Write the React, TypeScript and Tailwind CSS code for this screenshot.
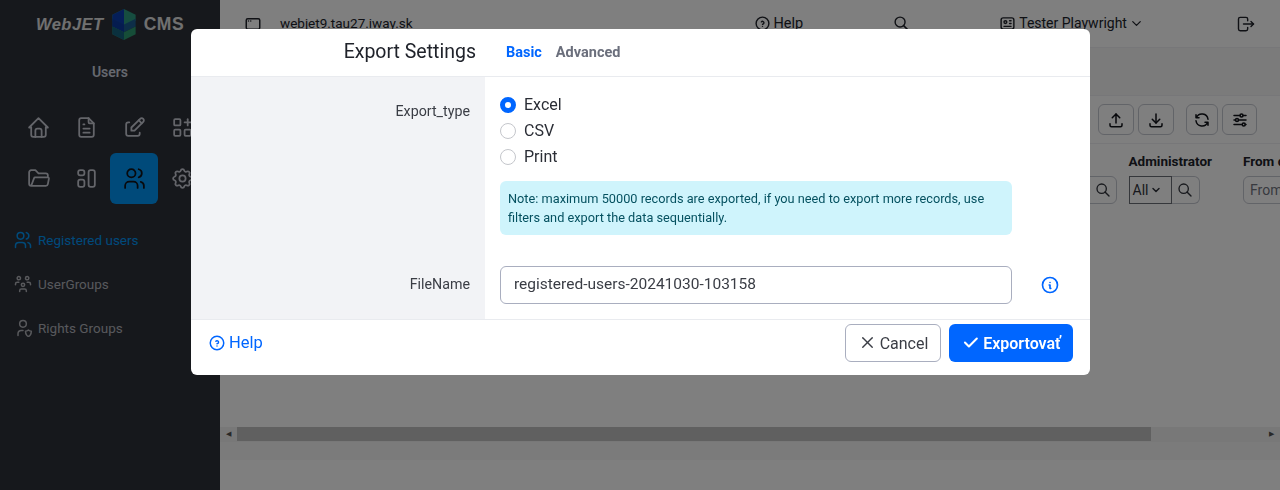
import {
  TbAdjustmentsHorizontal,
  TbApps,
  TbAppWindow,
  TbCheck,
  TbChevronDown,
  TbDownload,
  TbEdit,
  TbFileText,
  TbFolderOpen,
  TbHelpCircle,
  TbHome,
  TbId,
  TbInfoCircle,
  TbLayout,
  TbLogout,
  TbRefresh,
  TbSearch,
  TbSettings,
  TbUpload,
  TbUsers,
  TbUsersGroup,
  TbUserShield,
  TbX,
} from 'react-icons/tb'

const railIcons = [TbHome, TbFileText, TbEdit, TbApps, TbFolderOpen, TbLayout, TbUsers, TbSettings]

const sideLinks = [
  { label: 'Registered users', Icon: TbUsers, active: true },
  { label: 'UserGroups', Icon: TbUsersGroup, active: false },
  { label: 'Rights Groups', Icon: TbUserShield, active: false },
]

function Logo() {
  return (
    <div className="flex h-[47px] items-center justify-center gap-[7px] pt-[1px]">
      <span className="font-['Liberation_Sans',sans-serif] text-[16.5px] font-bold italic tracking-[0.5px] text-[#e0e0e0]">WebJET</span>
      <svg width="26" height="31" viewBox="0 0 26 32">
        <polygon points="13,0 25,6 25,12 13,18 1,12 1,6" fill="#2c9a80" />
        <polygon points="13,0 13,18 1,12 1,6" fill="#0a3cb0" />
        <polygon points="25,10 25,18 13,24 1,18 1,10 13,16" fill="#1a5c90" />
        <polygon points="13,16 13,24 1,18 1,10" fill="#0a38a0" />
        <polygon points="25,18 25,26 13,32 1,26 1,18 13,24" fill="#2c9a70" />
        <polygon points="13,24 13,32 1,26 1,18" fill="#14607c" />
      </svg>
      <span className="font-['Liberation_Sans',sans-serif] text-[17.5px] font-bold tracking-[0.5px] text-[#e0e0e0]">CMS</span>
    </div>
  )
}

function Sidebar() {
  return (
    <aside className="flex h-full w-[220px] shrink-0 flex-col overflow-hidden bg-[#2d3039]">
      <Logo />
      <div className="mt-[15px] text-center text-[14px] font-semibold text-[#cbd0de]">Users</div>
      <div className="mt-[19px] grid w-[260px] grid-cols-[repeat(4,48px)] pl-[14px]">
        {railIcons.map((Icon, i) => (
          <div
            key={i}
            className={`flex h-[51px] w-[48px] items-center justify-center rounded-[6px] ${i === 6 ? 'bg-[#0095f5] text-[#101218]' : 'text-[#c8cbd4]'}`}
          >
            <Icon size={25} strokeWidth={1.7} />
          </div>
        ))}
      </div>
      <nav className="mt-[23px] flex flex-col gap-[18px] pl-[13px]">
        {sideLinks.map(({ label, Icon, active }) => (
          <div key={label} className={`flex h-[26px] items-center gap-[5px] text-[13.5px] ${active ? 'text-[#0095f5]' : 'text-[#b0b2b8]'}`}>
            <Icon size={20} strokeWidth={1.8} />
            <span>{label}</span>
          </div>
        ))}
      </nav>
    </aside>
  )
}

function IconButton({ children }: { children: React.ReactNode }) {
  return <div className="flex h-[31px] items-center justify-center rounded-[6px] border border-[#c5c8d0] text-[#101218]">{children}</div>
}

function Main() {
  return (
    <main className="flex h-full min-w-0 flex-1 flex-col overflow-hidden bg-white">
      <header className="flex h-[48px] shrink-0 items-center border-b border-[#eeeff2] text-[14px] text-[#20232b]">
        <TbAppWindow size={18} className="ml-[24px]" />
        <span className="ml-[18px] text-[13.5px]">webjet9.tau27.iway.sk</span>
        <TbHelpCircle size={17} className="ml-[341px]" />
        <span className="ml-[3px] text-[14.5px]">Help</span>
        <TbSearch size={17} className="ml-[90px]" />
        <TbId size={17} className="ml-[89px]" />
        <span className="ml-[3px]">Tester Playwright</span>
        <TbChevronDown size={15} className="ml-[2px]" />
        <TbLogout size={20} strokeWidth={1.7} className="ml-[92px]" />
      </header>
      <div className="h-[48px] shrink-0 border-b border-[#eeeff2] bg-[#f6f6f7]" />
      <div className="flex h-[48px] shrink-0 items-center justify-end border-b border-[#eeeff2] pr-[23px]">
        <div className="flex gap-[4px]">
          <div className="w-[36px]"><IconButton><TbUpload size={18} /></IconButton></div>
          <div className="w-[36px]"><IconButton><TbDownload size={18} /></IconButton></div>
          <div className="ml-[8px] w-[32px]"><IconButton><TbRefresh size={18} /></IconButton></div>
          <div className="w-[35px]"><IconButton><TbAdjustmentsHorizontal size={18} /></IconButton></div>
        </div>
      </div>
      <div className="flex h-[60px] shrink-0 justify-end gap-[31px] overflow-hidden pt-[7px]">
        <div className="-mr-[19px] flex flex-col">
          <span className="h-[25px]" />
          <div className="flex h-[28px] w-[60px] items-center justify-end rounded-r-[6px] border border-[#c5c8d0] pr-[5px] text-[#30333b]">
            <TbSearch size={16} />
          </div>
        </div>
        <div className="flex flex-col">
          <span className="h-[25px] text-[13.5px] font-bold text-[#20232b]">Administrator</span>
          <div className="flex h-[28px] w-[71px] items-center text-[14px] text-[#30333b]">
            <span className="flex h-full w-[43px] items-center gap-[2px] border border-[#6b6e76] pl-[3px]">All <TbChevronDown size={12} strokeWidth={3} /></span>
            <span className="flex h-full w-[28px] items-center justify-center rounded-r-[6px] border-y border-r border-[#c5c8d0]">
              <TbSearch size={16} />
            </span>
          </div>
        </div>
        <div className="flex w-[37px] flex-col">
          <span className="h-[25px] text-[13.5px] font-bold whitespace-nowrap text-[#20232b]">From date</span>
          <div className="flex h-[28px] w-[80px] items-center rounded-[6px] border border-[#c5c8d0] pl-[6px] text-[14px] text-[#70747e]">From</div>
        </div>
      </div>
      <div className="flex-1" />
      <div className="flex h-[15px] shrink-0 items-center justify-between bg-[#f1f1f1] px-[6px] text-[7px] text-[#505050]">
        <span>◀</span>
      </div>
      <div className="relative h-0">
        <div className="absolute top-[-15px] left-[17px] h-[14px] w-[914px] bg-[#c1c1c1]" />
        <span className="absolute top-[-12px] right-[6px] text-[7px] leading-[8px] text-[#505050]">▶</span>
      </div>
      <div className="mb-[30px] h-[18px] shrink-0 bg-[#f6f6f7]" />
    </main>
  )
}

function ExportDialog() {
  return (
    <div className="fixed inset-0 bg-black/50">
      <div className="mt-[29px] ml-[191px] flex h-[346px] w-[899px] flex-col overflow-hidden rounded-[6px] bg-white">
        <div className="flex h-[48px] shrink-0 items-center border-b border-[#e9ebef]">
          <div className="w-[294px] pr-[9px] pb-[1px] text-right text-[19.5px] text-[#20232b]">Export Settings</div>
          <div className="ml-[21px] flex gap-[14px] pt-[1px] text-[14.5px] font-bold">
            <span className="text-[#0066ff]">Basic</span>
            <span className="text-[#6b6f7c]">Advanced</span>
          </div>
        </div>
        <div className="flex min-h-0 flex-1">
          <div className="flex w-[294px] shrink-0 flex-col items-end bg-[#f2f3f6] pr-[15px] text-[14.25px] text-[#3a3d45]">
            <div className="mt-[24px]">Export_type</div>
            <div className="mt-[152px]">FileName</div>
          </div>
          <div className="flex-1 pt-[15px] pl-[15px]">
            <div className="flex flex-col text-[16px] text-[#2a2d35]">
              <label className="flex h-[26px] items-center gap-[8px]">
                <span className="h-[16px] w-[16px] rounded-full border-[5px] border-[#0066ff] bg-white" />
                Excel
              </label>
              <label className="flex h-[26px] items-center gap-[8px]">
                <span className="h-[16px] w-[16px] rounded-full border border-[#c4c6cb] bg-white" />
                CSV
              </label>
              <label className="flex h-[26px] items-center gap-[8px]">
                <span className="h-[16px] w-[16px] rounded-full border border-[#c4c6cb] bg-white" />
                Print
              </label>
            </div>
            <div className="mt-[11px] h-[54px] w-[512px] rounded-[6px] bg-[#cff4fc] px-[8px] pt-[8px] text-[12.75px] leading-[19px] text-[#055160]">
              Note: maximum 50000 records are exported, if you need to export more records, use filters and export the data sequentially.
            </div>
            <div className="mt-[31px] flex items-center">
              <div className="flex h-[38px] w-[512px] items-center rounded-[6px] border border-[#a9aebf] pl-[13px] text-[15.5px] text-[#3a3d45]">
                registered-users-20241030-103158
              </div>
              <TbInfoCircle size={20} className="ml-[28px] text-[#0066ff]" />
            </div>
          </div>
        </div>
        <div className="flex h-[56px] shrink-0 items-start justify-between border-t border-[#e9ebef] pt-[4px] pr-[17px] pl-[17px]">
          <div className="flex h-[38px] items-center gap-[3px] pt-[1px] text-[16.5px] text-[#0066ff]">
            <TbHelpCircle size={18} className="-mt-[2px]" />
            Help
          </div>
          <div className="flex gap-[8px] text-[16px]">
            <div className="flex h-[38px] w-[96px] items-center justify-center gap-[3px] rounded-[6px] border border-[#a9aebf] pt-[1px] text-[#3a3d45]">
              <TbX size={19} strokeWidth={1.7} className="-mt-[2px]" />
              Cancel
            </div>
            <div className="flex h-[38px] w-[124px] items-center justify-center gap-[3px] rounded-[6px] bg-[#0066ff] pt-[1px] font-semibold text-white">
              <TbCheck size={19} strokeWidth={2.6} className="-mt-[2px]" />
              Exportovať
            </div>
          </div>
        </div>
      </div>
    </div>
  )
}

export default function App() {
  return (
    <div className="flex h-[490px] w-[1280px] overflow-hidden font-['Roboto',sans-serif]">
      <Sidebar />
      <Main />
      <ExportDialog />
    </div>
  )
}
